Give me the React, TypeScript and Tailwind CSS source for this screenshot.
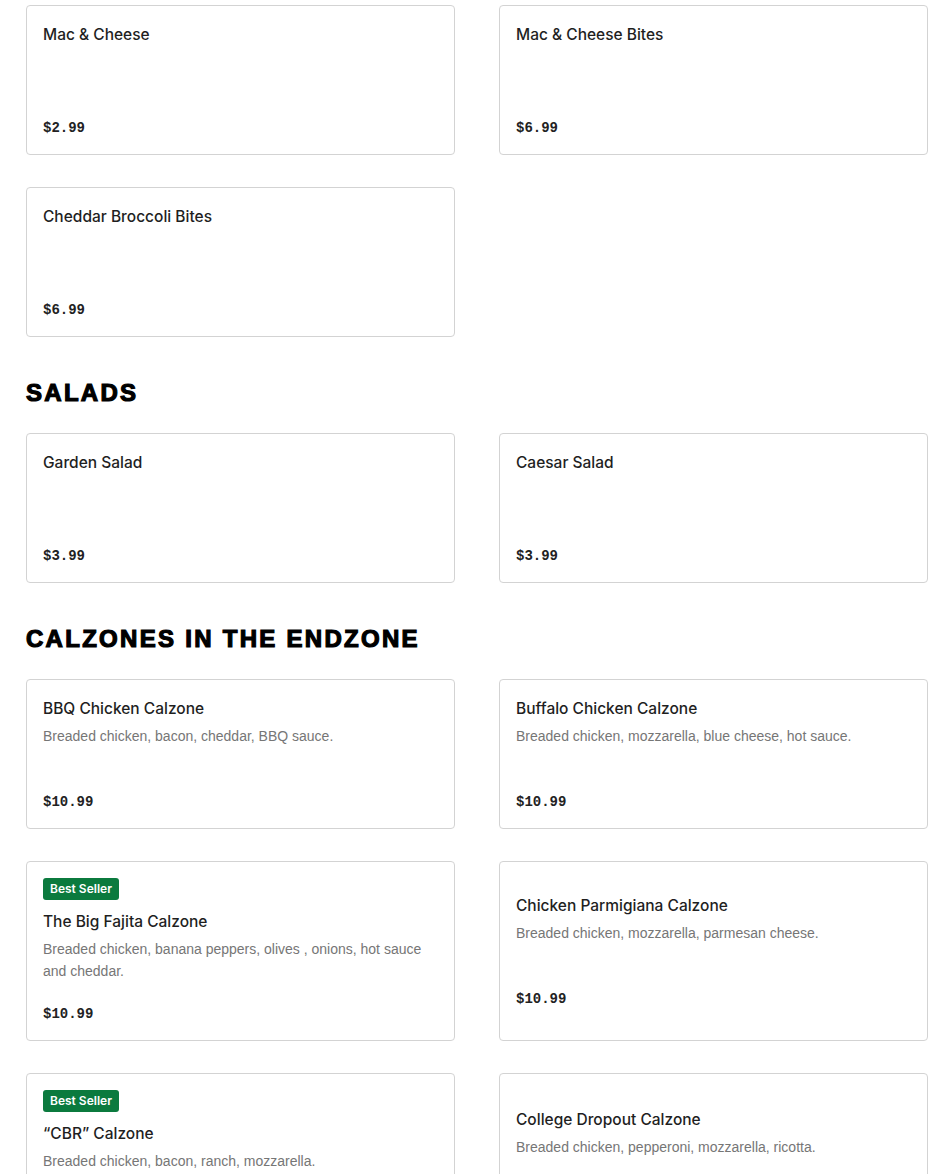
import React from 'react'

type Item = {
  name: string
  price: string
  desc?: string
  badge?: string
  tall?: boolean
}

type Section = {
  title?: string
  items: Item[]
}

const sections: Section[] = [
  {
    items: [
      { name: 'Mac & Cheese', price: '$2.99' },
      { name: 'Mac & Cheese Bites', price: '$6.99' },
      { name: 'Cheddar Broccoli Bites', price: '$6.99' },
    ],
  },
  {
    title: 'SALADS',
    items: [
      { name: 'Garden Salad', price: '$3.99' },
      { name: 'Caesar Salad', price: '$3.99' },
    ],
  },
  {
    title: 'CALZONES IN THE ENDZONE',
    items: [
      { name: 'BBQ Chicken Calzone', desc: 'Breaded chicken, bacon, cheddar, BBQ sauce.', price: '$10.99' },
      { name: 'Buffalo Chicken Calzone', desc: 'Breaded chicken, mozzarella, blue cheese, hot sauce.', price: '$10.99' },
      {
        name: 'The Big Fajita Calzone',
        desc: 'Breaded chicken, banana peppers, olives , onions, hot sauce and cheddar.',
        price: '$10.99',
        badge: 'Best Seller',
      },
      { name: 'Chicken Parmigiana Calzone', desc: 'Breaded chicken, mozzarella, parmesan cheese.', price: '$10.99' },
      {
        name: '\u201cCBR\u201d Calzone',
        desc: 'Breaded chicken, bacon, ranch, mozzarella.',
        price: '$10.99',
        badge: 'Best Seller',
        tall: true,
      },
      { name: 'College Dropout Calzone', desc: 'Breaded chicken, pepperoni, mozzarella, ricotta.', price: '$10.99' },
    ],
  },
]

function MenuCard({ item }: { item: Item }) {
  return (
    <div className="flex flex-col justify-center rounded-[4px] border border-[#d3d3d3] bg-white p-4">
      <div className="flex min-h-[116px] flex-col">
        {item.badge && (
          <span className="mb-[9px] self-start rounded-[3px] bg-[#0b7a3e] px-[7px] text-[12px] font-semibold leading-[22px] text-white">
            {item.badge}
          </span>
        )}
        <h3 className="pt-px text-[15.5px] font-medium leading-6 text-[#1f1f1f]">{item.name}</h3>
        {item.desc && (
          <p className="mt-1 font-['Liberation_Sans',sans-serif] text-[14px] leading-[22px] text-[#767676]">
            {item.desc}
          </p>
        )}
        <div
          className={
            item.tall
              ? "mt-auto pt-[48px] font-['Liberation_Mono',monospace] text-[14px] font-bold leading-5 text-[#222]"
              : "mt-auto pt-[22px] font-['Liberation_Mono',monospace] text-[14px] font-bold leading-5 text-[#222]"
          }
        >
          {item.price}
        </div>
      </div>
    </div>
  )
}

export default function App() {
  return (
    <div className="min-h-screen bg-white px-[26px] pt-[5px] pb-10 font-['Inter',sans-serif]">
      {sections.map((section, i) => (
        <section key={i}>
          {section.title && (
            <h2 className="mt-10 mb-6 font-['Liberation_Sans',sans-serif] text-[24px] font-bold leading-8 tracking-[0.095em] text-black [-webkit-text-stroke:1.2px_black]">
              {section.title}
            </h2>
          )}
          <div className="grid grid-cols-[429px_429px] gap-x-[44px] gap-y-8">
            {section.items.map((item) => (
              <MenuCard key={item.name} item={item} />
            ))}
          </div>
        </section>
      ))}
    </div>
  )
}
